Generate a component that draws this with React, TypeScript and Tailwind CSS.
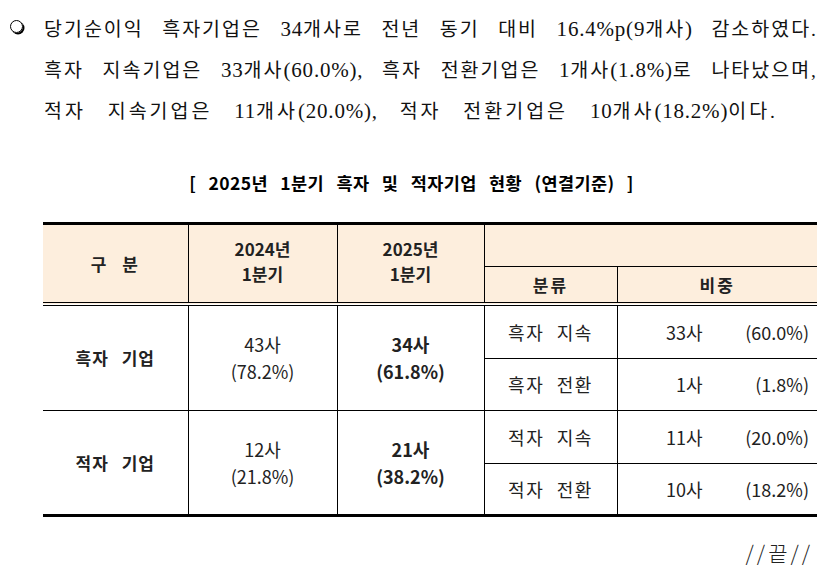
const serif = "font-['Liberation_Serif','Noto_Sans_CJK_KR',serif]";
const sans = "font-['Noto_Sans_CJK_KR','Liberation_Sans',sans-serif]";

function L({ children }: { children: React.ReactNode }) {
  return <span className="text-[21px] tracking-[0.8px]">{children}</span>;
}

function Para() {
  const line = "text-justify [text-align-last:justify] h-[41px]";
  return (
    <div className={`${serif} text-[19.5px] text-[#111] leading-[41px] flex pt-[9px] tracking-[2px]`}>
      <div className="w-[44px] pl-[10px] pt-[11px]">
        <div className="w-[13px] h-[13px] rounded-full border-[1.5px] border-black shadow-[1.5px_1.5px_0_#000]" />
      </div>
      <div className="w-[774px]">
        <div className={line}>
          당기순이익 흑자기업은 <L>34</L>개사로 전년 동기 대비 <L>16.4%p(9</L>개사<L>)</L> 감소하였다.
        </div>
        <div className={line}>
          흑자 지속기업은 <L>33</L>개사<L>(60.0%),</L> 흑자 전환기업은 <L>1</L>개사<L>(1.8%)</L>로 나타났으며,
        </div>
        <div className={`${line} w-[734px] tracking-[3px]`}>
          적자 지속기업은 <L>11</L>개사<L>(20.0%),</L> 적자 전환기업은 <L>10</L>개사<L>(18.2%)</L>이다.
        </div>
      </div>
    </div>
  );
}

const td = "border-black text-center align-middle";

function Share({ n, p }: { n: string; p: string }) {
  return (
    <div className="flex pr-[8px]">
      <span className="w-[85px] text-right">{n}</span>
      <span className="flex-1 text-right">{p}</span>
    </div>
  );
}

export default function App() {
  return (
    <div className="w-[827px] h-[583px] bg-white overflow-hidden">
      <Para />
      <div className={`${sans} text-[17.5px] font-bold text-center mt-[38px] text-black tracking-[0.4px] [word-spacing:8px] pr-[4px]`}>
        [ 2025년 1분기 흑자 및 적자기업 현황 (연결기준) ]
      </div>
      <table className={`${sans} ml-[43px] mt-[26px] border-collapse text-[18px] text-[#222] table-fixed w-[774px]`}>
        <colgroup>
          <col className="w-[145px]" />
          <col className="w-[149px]" />
          <col className="w-[147px]" />
          <col className="w-[133px]" />
          <col className="w-[200px]" />
        </colgroup>
        <tbody>
          <tr className="h-[43px] bg-[#fdeedd] border-t-[3px] border-black">
            <td rowSpan={2} className={`${td} border-r font-bold text-[17px] tracking-[6px] pl-[4px]`}>구 분</td>
            <td rowSpan={2} className={`${td} border-r font-bold text-[17px] leading-[25px] pb-[6px]`}>2024년<br />1분기</td>
            <td rowSpan={2} className={`${td} border-r font-bold text-[17px] leading-[25px] pb-[6px]`}>2025년<br />1분기</td>
            <td colSpan={2} className={`${td} border-b`}></td>
          </tr>
          <tr className="h-[37px] bg-[#fdeedd] border-b-[4px] border-double border-black">
            <td className={`${td} border-r font-bold text-[17px] tracking-[2px]`}>분류</td>
            <td className={`${td} font-bold text-[17px] tracking-[2px]`}>비중</td>
          </tr>
          <tr className="h-[55px]">
            <td rowSpan={2} className={`${td} border-r border-b font-bold text-[17px] tracking-[1px] [word-spacing:8px]`}>흑자 기업</td>
            <td rowSpan={2} className={`${td} border-r border-b leading-[27px]`}>43사<br />(78.2%)</td>
            <td rowSpan={2} className={`${td} border-r border-b font-bold leading-[27px]`}>34사<br />(61.8%)</td>
            <td className={`${td} border-r border-b tracking-[1.5px] [word-spacing:7px]`}>흑자 지속</td>
            <td className={`${td} border-b`}><Share n="33사" p="(60.0%)" /></td>
          </tr>
          <tr className="h-[52px]">
            <td className={`${td} border-r border-b tracking-[1.5px] [word-spacing:7px]`}>흑자 전환</td>
            <td className={`${td} border-b`}><Share n="1사" p="(1.8%)" /></td>
          </tr>
          <tr className="h-[53px]">
            <td rowSpan={2} className={`${td} border-r font-bold text-[17px] tracking-[1px] [word-spacing:8px]`}>적자 기업</td>
            <td rowSpan={2} className={`${td} border-r leading-[27px]`}>12사<br />(21.8%)</td>
            <td rowSpan={2} className={`${td} border-r font-bold leading-[27px]`}>21사<br />(38.2%)</td>
            <td className={`${td} border-r border-b tracking-[1.5px] [word-spacing:7px]`}>적자 지속</td>
            <td className={`${td} border-b`}><Share n="11사" p="(20.0%)" /></td>
          </tr>
          <tr className="h-[52px] border-b-[3px] border-black">
            <td className={`${td} border-r tracking-[1.5px] [word-spacing:7px]`}>적자 전환</td>
            <td className={td}><Share n="10사" p="(18.2%)" /></td>
          </tr>
        </tbody>
      </table>
      <div className={`${sans} text-right pr-[14px] mt-[20px] text-[21px] font-light text-[#222] tracking-[3px]`}>
        //끝//
      </div>
    </div>
  );
}
